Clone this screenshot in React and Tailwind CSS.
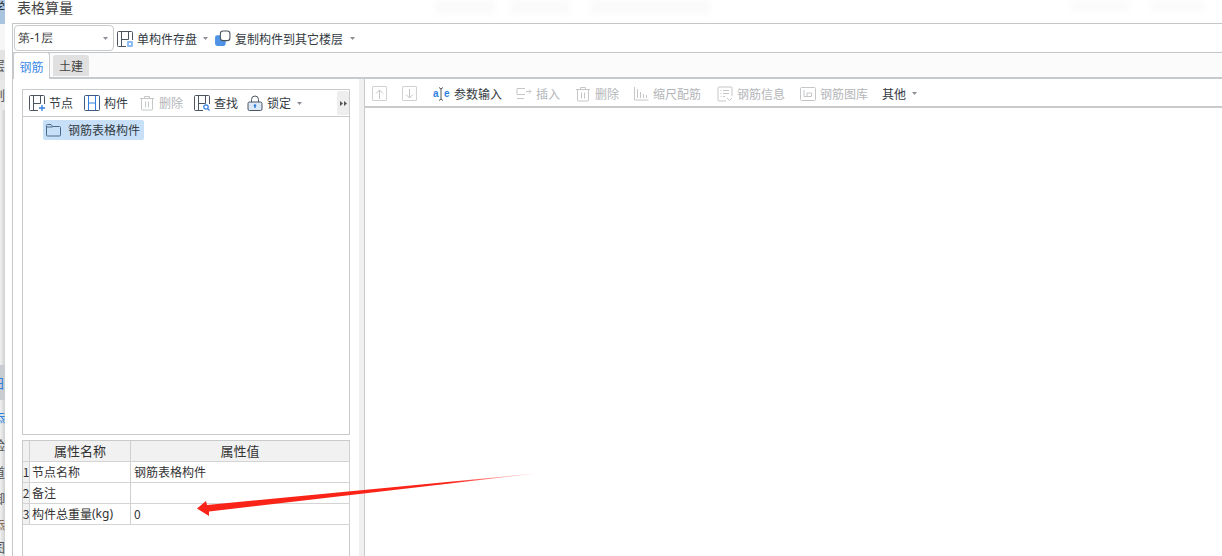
const font = { fontFamily: '"Noto Sans CJK SC", "Liberation Sans", sans-serif' };

const Caret = ({ className = '' }) => (
  <svg width="5" height="3" viewBox="0 0 5 3" className={className}>
    <path d="M0 0h5L2.5 3z" fill="#8a8f96" />
  </svg>
);

const Icon = ({ children, size = 16 }) => (
  <svg width={size} height={size} viewBox="0 0 16 16" fill="none" className="shrink-0">
    {children}
  </svg>
);

const DARK = '#4a5560';
const BLUE = '#2f7fe0';
const GREY = '#c4c6c8';

const SaveIcon = () => (
  <Icon>
    <path d="M9 15.500H1.500a1 1 0 0 1-1-1v-13a1 1 0 0 1 1-1h13a1 1 0 0 1 1 1V9" stroke={DARK} />
    <path d="M4.500 1v14M4.500 8.500h7M11.500 1v7.500" stroke={DARK} />
    <rect x="10" y="10" width="6" height="6" rx="1" fill="#8dbcf0" />
    <rect x="12" y="12" width="2" height="2" fill="#fff" />
  </Icon>
);

const CopyIcon = () => (
  <Icon size={17}>
    <path d="M3 5h6a2 2 0 0 1 2 2v6a2 2 0 0 1-2 2H3a2 2 0 0 1-2-2V7a2 2 0 0 1 2-2z" fill="#4f93e6" />
    <rect x="6" y="1" width="9" height="9" rx="2.500" fill="#fff" stroke={DARK} />
  </Icon>
);

const NodeIcon = () => (
  <Icon>
    <path d="M9 15.500H1.500a1 1 0 0 1-1-1v-13a1 1 0 0 1 1-1h13a1 1 0 0 1 1 1V9" stroke={DARK} />
    <path d="M4.500 1v14M4.500 8.500h7M11.500 1v7.500" stroke={DARK} />
    <path d="M13 10v6M10 13h6" stroke={BLUE} strokeWidth="1.300" />
  </Icon>
);

const PartIcon = () => (
  <Icon>
    <rect x=".5" y=".5" width="15" height="15" rx="1" stroke="#3d5a80" />
    <path d="M4.500 1v14M11.500 1v14M4.500 8h7" stroke={BLUE} />
  </Icon>
);

const TrashIcon = () => (
  <Icon>
    <path d="M1 3.500h14M5.500 3V1.500h5V3M2.500 4v10a1 1 0 0 0 1 1h9a1 1 0 0 0 1-1V4M6.500 6.500v6M9.500 6.500v6" stroke={GREY} />
  </Icon>
);

const FindIcon = () => (
  <Icon>
    <path d="M9 15.500H1.500a1 1 0 0 1-1-1v-13a1 1 0 0 1 1-1h13a1 1 0 0 1 1 1V9" stroke={DARK} />
    <path d="M4.500 1v14M4.500 8.500h7M11.500 1v7.500" stroke={DARK} />
    <circle cx="12" cy="12" r="2.200" stroke={BLUE} strokeWidth="1.200" />
    <path d="M13.600 13.600 15.500 15.500" stroke={BLUE} strokeWidth="1.200" />
  </Icon>
);

const LockIcon = () => (
  <Icon>
    <path d="M4.500 7V4.500a3.500 3.500 0 0 1 7 0V7" stroke={DARK} />
    <rect x="1" y="7" width="14" height="8.500" rx="1.500" fill="#dbe8f8" stroke={DARK} />
    <circle cx="8" cy="10.500" r="1.300" fill={BLUE} />
    <path d="M8 11v2" stroke={BLUE} strokeWidth="1.300" />
  </Icon>
);

const FolderIcon = () => (
  <svg width="15" height="13" viewBox="0 0 15 13" fill="none">
    <path d="M.5 11V1.500a1 1 0 0 1 1-1h3.500l1.500 2h7a1 1 0 0 1 1 1V11a1 1 0 0 1-1 1h-12a1 1 0 0 1-1-1z" stroke="#4a6a8c" />
    <path d="M1 3h5.500" stroke="#4a6a8c" />
  </svg>
);

const ArrowBox = ({ up }) => (
  <div className="w-[15px] h-[15px] border border-[#cfd1d3] rounded-[1px] flex items-center justify-center">
    <svg width="9" height="10" viewBox="0 0 9 10" fill="none">
      <path d={up ? 'M4.500 10V1M1 4.500 4.500 1 8 4.500' : 'M4.500 0v9M1 5.500 4.500 9 8 5.500'} stroke={GREY} />
    </svg>
  </div>
);

const AeIcon = () => (
  <svg width="17" height="16" viewBox="0 0 17 16" fill="none" className="shrink-0">
    <text x="0" y="11" fontSize="10" fontWeight="700" fill={BLUE} fontFamily="Liberation Sans">a</text>
    <text x="11" y="11" fontSize="10" fontWeight="700" fill={BLUE} fontFamily="Liberation Sans">e</text>
    <path d="M6 1.500 8 3l2-1.500M6 14.500 8 13l2 1.500M8 3v10" stroke="#555" />
  </svg>
);

const InsertIcon = () => (
  <Icon>
    <path d="M9 2.500H1v6h8" stroke={GREY} />
    <path d="M1 12.500h7" stroke={GREY} />
    <path d="M10 5.500h5M13 3.500l2 2-2 2" stroke={GREY} />
  </Icon>
);

const RulerIcon = () => (
  <Icon>
    <path d="M1.500 1v13h14M4.500 3v9M7.500 6v6M10.500 8v4M13.500 9v3" stroke={GREY} />
  </Icon>
);

const InfoIcon = () => (
  <Icon>
    <path d="M9 15H2a1 1 0 0 1-1-1V2a1 1 0 0 1 1-1h12a1 1 0 0 1 1 1v8" stroke={GREY} />
    <path d="M3.500 4.500h1M6 4.500h6M3.500 7.500h1M6 7.500h6M3.500 10.500h1M6 10.500h2" stroke={GREY} />
    <path d="M10 12l2.500 2.500L15 12" stroke={GREY} />
  </Icon>
);

const LibIcon = () => (
  <Icon>
    <rect x=".5" y="1.500" width="15" height="13" rx="1" stroke={GREY} />
    <path d="M4 4v6.500h7.500V7H7v3" stroke={GREY} />
  </Icon>
);

const ToolBtn = ({ icon, label, disabled, className = '' }) => (
  <div className={`flex items-center gap-[4px] text-[12px] leading-none ${disabled ? 'text-[#b4b6b9]' : 'text-[#333a42]'} ${className}`}>
    {icon}
    <span>{label}</span>
  </div>
);

const rows = [
  ['1', '节点名称', '', '钢筋表格构件'],
  ['2', '备注', '', ''],
  ['3', '构件总重量', '(kg)', '0'],
];

const FADE = 'bg-gradient-to-r from-[#f1f1f1] to-[#cfd0d2]';

// slices of the window behind, top to bottom
const sideSlices = [
  ['h-[24px] items-start', 'bg-[#a9c4de]', '学', 'text-[#333]'],
  ['h-[26px] items-center', 'bg-[#f6f6f6]', '', ''],
  ['h-[30px] items-center', 'bg-[#e3e3e3]', '层', 'text-[#555]'],
  ['h-[30px] items-center', 'bg-[#e8e8e8]', '制', 'text-[#555]'],
  ['h-[255px] items-center', FADE, '', ''],
  ['h-[35px] items-center', 'bg-[#c9ccd1]', '日', 'text-[#2f7fe0]'],
  ['h-[5px] items-center', FADE, '', ''],
  ['h-[26px] items-center', FADE, '添', 'text-[#2f7fe0]'],
  ['h-[27px] items-center', FADE, '验', 'text-[#555]'],
  ['h-[27px] items-center', FADE, '道', 'text-[#555]'],
  ['h-[26px] items-center', FADE, '御', 'text-[#555]'],
  ['h-[27px] items-center', FADE, '添', 'text-[#8a6a50]'],
  ['h-[18px] items-center', FADE, '图', 'text-[#555]'],
];

export default function App() {
  return (
    <div className="relative w-[1222px] h-[556px] overflow-hidden bg-white flex" style={font}>
      <div className="w-[5px] shrink-0 h-full overflow-hidden flex flex-col">
        {sideSlices.map(([size, bg, g, color], i) => (
          <div key={i} className={`${size} ${bg} shrink-0 flex justify-end overflow-hidden`}>
            {g && <span className={`${color} shrink-0 text-[13px] leading-[14px] w-[13px]`}>{g}</span>}
          </div>
        ))}
      </div>

      <div className="flex-1 min-w-0 flex flex-col pl-[7px]">
        <div className="h-[23px] shrink-0 pl-[5px] flex text-[14px] leading-[16px] text-[#444]">
          <span className="w-[418px] shrink-0 -mt-[1px]">表格算量</span>
          <div className="w-[60px] h-[14px] bg-[#fafafa] blur-[3px]" />
          <div className="w-[60px] h-[14px] ml-[15px] bg-[#fafafa] blur-[3px]" />
          <div className="w-[120px] h-[14px] ml-[20px] bg-[#fafafa] blur-[3px]" />
          <div className="w-[60px] h-[12px] ml-[360px] bg-[#fbfbfb] blur-[3px]" />
          <div className="w-[55px] h-[12px] ml-[20px] bg-[#fbfbfb] blur-[3px]" />
        </div>

        <div className="flex-1 min-h-0 border-l border-[#c4c7ca] flex flex-col">
          <div className="h-[30px] shrink-0 border-y border-[#c4c7ca] flex items-center pl-[1px]">
            <div className="w-[100px] h-[26px] border border-[#c8cacc] rounded-[4px] flex items-center justify-between pl-[3px] pr-[5px] text-[12px] text-[#333]">
              <span className="font-['Noto_Sans']">第-1层</span>
              <Caret />
            </div>
            <ToolBtn icon={<SaveIcon />} label="单构件存盘" className="ml-[3px] pt-[1px]" />
            <Caret className="ml-[6px]" />
            <ToolBtn icon={<CopyIcon />} label="复制构件到其它楼层" className="ml-[6px] pt-[1px]" />
            <Caret className="ml-[7px]" />
          </div>

          <div className="h-[26px] shrink-0 flex items-end border-b-2 border-[#c6cacd] bg-[#fbfbfb]">
            <div className="w-[37px] h-[27px] -mb-[2px] pt-[1px] bg-white border border-b-0 border-[#c8cacc] rounded-t-[3px] flex items-center justify-center text-[12px] text-[#3d8ae6]">钢筋</div>
            <div className="w-[36px] h-[21px] ml-[3px] mb-[1px] bg-[#e0e0e0] rounded-t-[3px] flex items-center justify-center text-[12px] text-[#444]">土建</div>
          </div>

          <div className="flex-1 min-h-0 flex">
            {/* left panel */}
            <div className="w-[346px] shrink-0 pl-[9px] pt-[10px] flex flex-col">
              <div className="w-[328px] h-[346px] shrink-0 border border-[#c8cacc] flex flex-col">
                <div className="h-[27px] shrink-0 border-b border-[#c8cacc] flex items-center pl-[6px] relative">
                  <ToolBtn icon={<NodeIcon />} label="节点" />
                  <ToolBtn icon={<PartIcon />} label="构件" className="ml-[11px]" />
                  <ToolBtn icon={<TrashIcon />} label="删除" disabled className="ml-[11px]" />
                  <ToolBtn icon={<FindIcon />} label="查找" className="ml-[11px]" />
                  <ToolBtn icon={<LockIcon />} label="锁定" className="ml-[9px]" />
                  <Caret className="ml-[6px]" />
                  <div className="absolute right-0 top-[1px] w-[12px] h-[24px] bg-[#eeeeee] rounded-[2px] flex items-center justify-center">
                    <svg width="7" height="5" viewBox="0 0 7 5"><path d="M0 0l3 2.500L0 5zM4 0l3 2.500L4 5z" fill="#555" /></svg>
                  </div>
                </div>
                <div className="pl-[20px] pt-[3px]">
                  <div className="w-[101px] h-[20px] bg-[#c7e0f8] rounded-[2px] flex items-center pl-[3px] gap-[7px] text-[12px] text-[#333a42]">
                    <FolderIcon />
                    <span>钢筋表格构件</span>
                  </div>
                </div>
              </div>

              <div className="mt-[5px] w-[328px] flex-1 border-x border-t border-[#c8cacc]">
                <div className="w-[327px] h-[21px] flex bg-[#f1f1f1] text-[13px] text-[#333] border-b border-[#d4d4d4]">
                  <div className="w-[7px] shrink-0 border-r border-[#d0d0d0]" />
                  <div className="w-[101px] shrink-0 border-r border-[#d0d0d0] flex items-center justify-center">属性名称</div>
                  <div className="flex-1 flex items-center justify-center border-r border-[#d0d0d0]">属性值</div>
                </div>
                {rows.map(([n, name, unit, val]) => (
                  <div key={n} className="w-[327px] h-[21px] flex text-[12px] text-[#333] border-b border-[#d4d4d4]">
                    <div className="w-[7px] shrink-0 bg-[#f1f1f1] border-r border-[#d0d0d0] flex items-center justify-center overflow-hidden">{n}</div>
                    <div className="w-[101px] shrink-0 border-r border-[#d0d0d0] flex items-center pl-[2px]">
                      <span>{name}</span>
                      {unit && <span className="font-['Noto_Sans']">{unit}</span>}
                    </div>
                    <div className="flex-1 flex items-center pl-[3px] border-r border-[#d0d0d0]">{val}</div>
                  </div>
                ))}
              </div>
            </div>

            {/* splitter */}
            <div className="w-[5px] shrink-0 bg-[#f0f0f0]" />

            {/* right panel */}
            <div className="flex-1 min-w-0 border-l border-[#c8cacc] flex flex-col">
              <div className="h-[29px] shrink-0 border-b-2 border-[#c8cacc] flex items-center pl-[7px] pt-[2px]">
                <ArrowBox up />
                <div className="ml-[15px]"><ArrowBox /></div>
                <ToolBtn icon={<AeIcon />} label="参数输入" className="ml-[16px]" />
                <ToolBtn icon={<InsertIcon />} label="插入" disabled className="ml-[14px]" />
                <ToolBtn icon={<TrashIcon />} label="删除" disabled className="ml-[15px]" />
                <ToolBtn icon={<RulerIcon />} label="缩尺配筋" disabled className="ml-[14px]" />
                <ToolBtn icon={<InfoIcon />} label="钢筋信息" disabled className="ml-[16px]" />
                <ToolBtn icon={<LibIcon />} label="钢筋图库" disabled className="ml-[15px]" />
                <span className="ml-[14px] text-[12px] text-[#333a42]">其他</span>
                <Caret className="ml-[6px]" />
              </div>
            </div>
          </div>
        </div>
      </div>

      {/* annotation arrow drawn over the screenshot */}
      <svg className="absolute left-0 top-0 pointer-events-none" width="1222" height="556" viewBox="0 0 1222 556" fill="none">
        <defs>
          <linearGradient id="tail" x1="540" y1="473" x2="450" y2="482" gradientUnits="userSpaceOnUse">
            <stop offset="0" stopColor="#ff2a20" stopOpacity="0.1" />
            <stop offset="1" stopColor="#fa2318" />
          </linearGradient>
        </defs>
        <path d="M197 508.500 206 501 207 505 540 473 209 511.500 209 516z" fill="url(#tail)" />
      </svg>
    </div>
  );
}
